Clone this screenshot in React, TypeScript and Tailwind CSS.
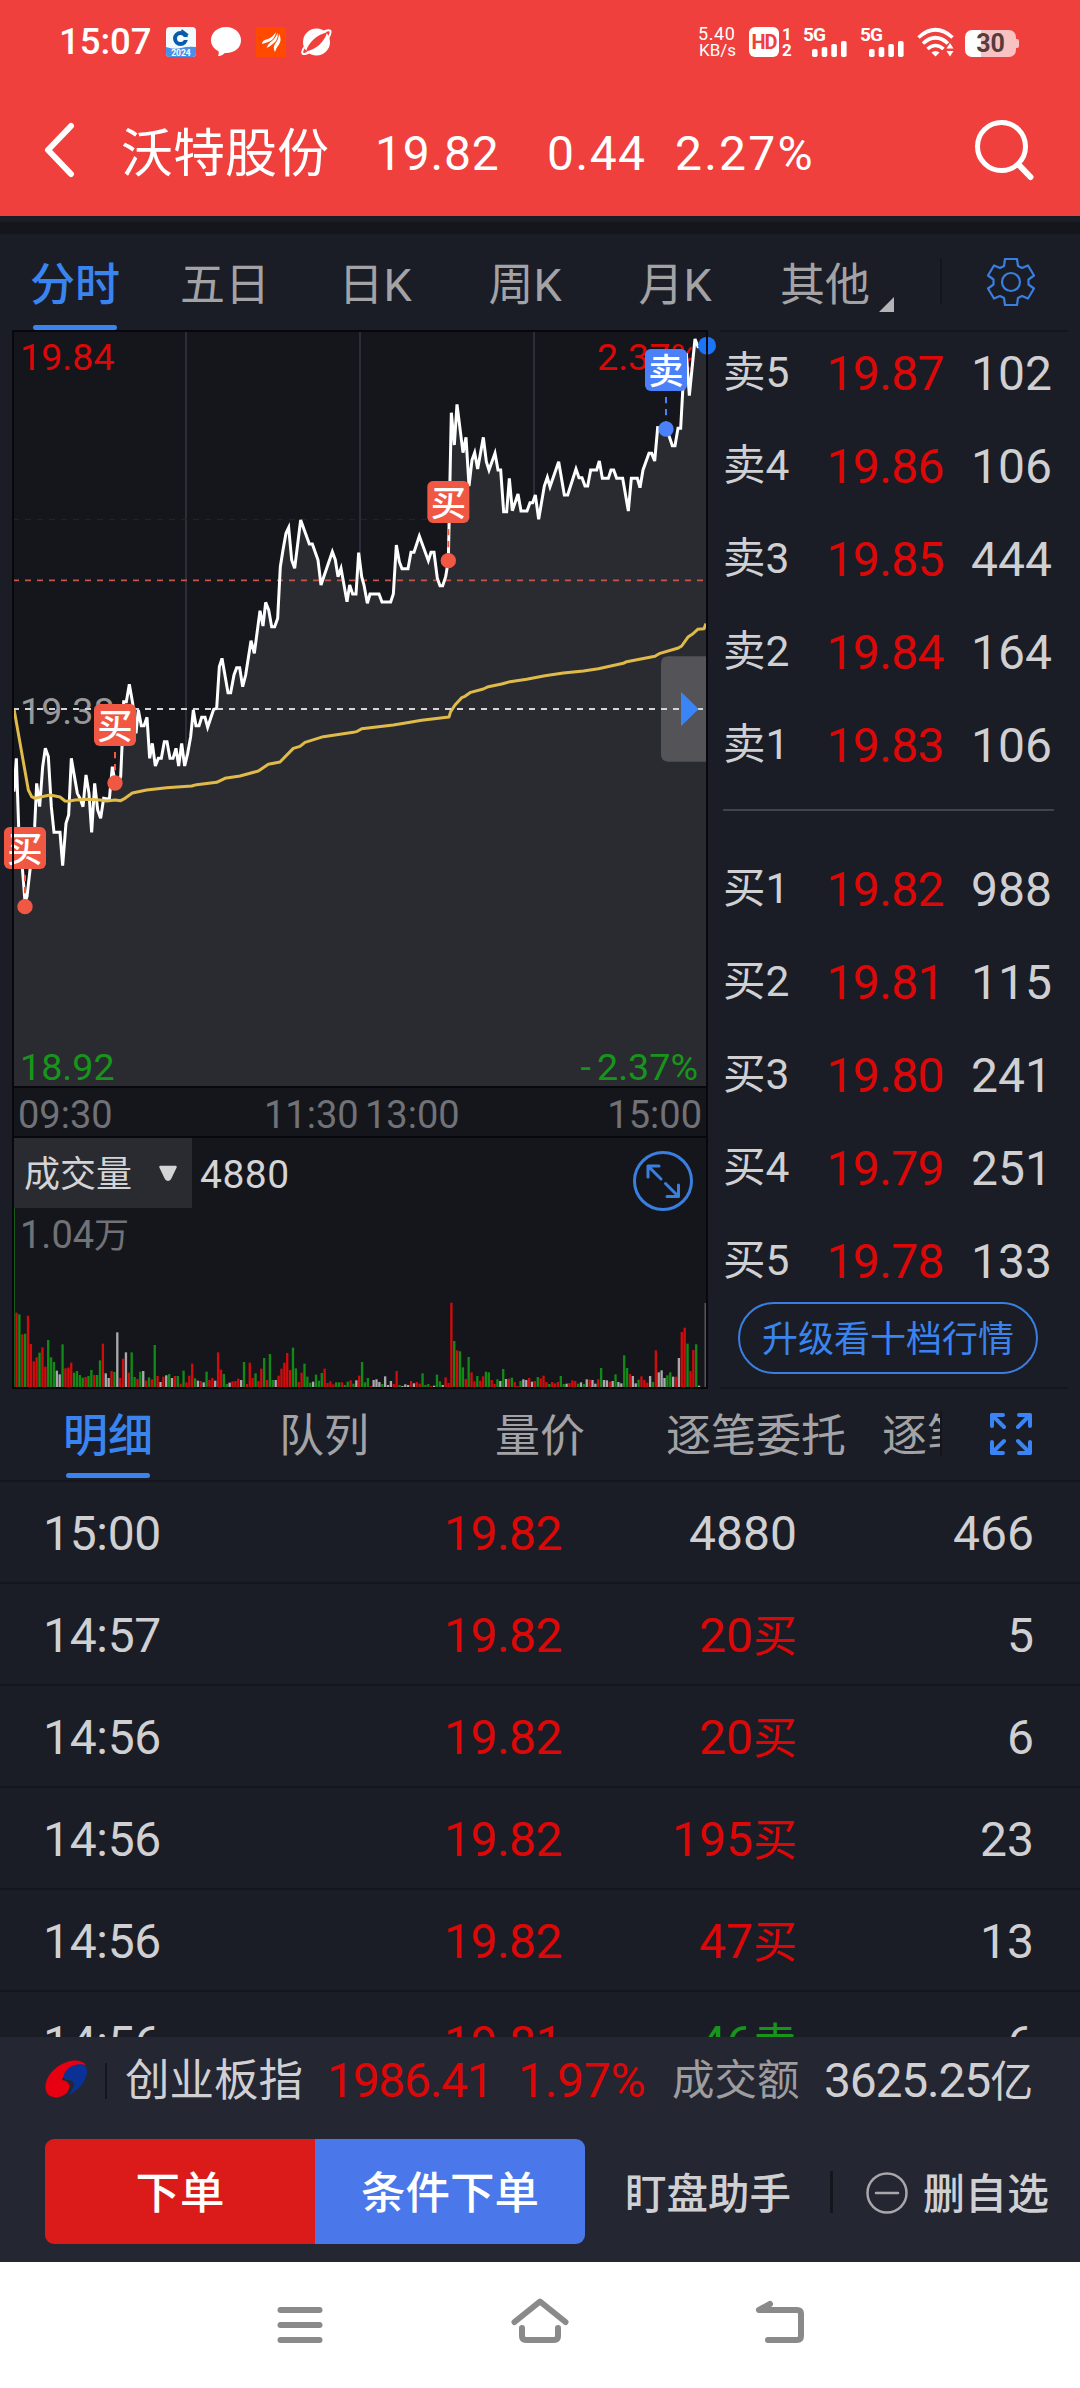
import React from "react";

// --- DATA ---

const periodTabs = ["分时", "五日", "日K", "周K", "月K", "其他"];
const detailTabs = ["明细", "队列", "量价", "逐笔委托", "逐笔成交"];

const asks = [
    { label: "卖5", price: "19.87", volume: "102" },
    { label: "卖4", price: "19.86", volume: "106" },
    { label: "卖3", price: "19.85", volume: "444" },
    { label: "卖2", price: "19.84", volume: "164" },
    { label: "卖1", price: "19.83", volume: "106" },
];

const bids = [
    { label: "买1", price: "19.82", volume: "988" },
    { label: "买2", price: "19.81", volume: "115" },
    { label: "买3", price: "19.80", volume: "241" },
    { label: "买4", price: "19.79", volume: "251" },
    { label: "买5", price: "19.78", volume: "133" },
];

const trades = [
    { time: "15:00", price: "19.82", volume: "4880", side: "", count: "466" },
    { time: "14:57", price: "19.82", volume: "20", side: "买", count: "5" },
    { time: "14:56", price: "19.82", volume: "20", side: "买", count: "6" },
    { time: "14:56", price: "19.82", volume: "195", side: "买", count: "23" },
    { time: "14:56", price: "19.82", volume: "47", side: "买", count: "13" },
    { time: "14:56", price: "19.81", volume: "46", side: "卖", count: "6" },
];

// Price per minute, chart units are a third of a pixel
const pricePoints =
    "42,1415 49,1315 56,1520 66,1630 75,1745 81,1730 90,1650 104,1520 110,1390 119,1460 128,1340 136,1285 145,1310 154,1460 162,1537 180,1537 188,1637 198,1510 206,1485 214,1315 232,1420 240,1435 249,1460 258,1365 267,1420 275,1537 284,1390 293,1470 302,1495 311,1435 328,1438 337,1340 345,1385 354,1390 362,1370 366,1280 371,1145 379,1145 388,1093 398,1150 408,1240 415,1170 424,1217 432,1217 441,1192 449,1315 457,1270 466,1338 475,1315 484,1315 493,1265 501,1265 510,1315 519,1315 528,1285 536,1338 545,1270 554,1338 563,1300 572,1250 580,1170 588,1217 597,1217 605,1192 615,1192 623,1222 632,1195 641,1168 650,1165 658,1040 666,1015 684,1118 692,1118 702,1065 710,1043 719,1043 728,1100 737,1065 753,962 763,1000 780,872 789,918 797,847 806,870 815,920 824,920 833,895 841,740 849,690 858,640 866,623 875,720 884,745 902,600 928,672 937,672 954,720 963,795 997,695 1006,720 1014,770 1023,745 1041,845 1049,795 1058,822 1068,822 1076,698 1085,770 1092,795 1102,850 1110,822 1137,822 1146,846 1172,846 1180,822 1189,675 1198,725 1206,746 1224,746 1233,697 1242,697 1258,648 1285,722 1293,697 1302,697 1312,775 1320,797 1328,797 1337,770 1345,722 1354,278 1363,375 1371,253 1389,398 1398,352 1407,498 1416,420 1424,398 1433,447 1450,352 1459,425 1467,450 1485,400 1494,450 1502,450 1511,575 1520,575 1528,475 1537,572 1554,522 1563,573 1581,573 1590,548 1598,548 1606,525 1616,598 1633,498 1642,472 1650,500 1676,425 1693,525 1703,525 1728,447 1737,473 1746,473 1755,498 1763,498 1772,450 1790,450 1798,423 1807,475 1825,475 1833,450 1841,450 1850,475 1868,475 1885,573 1894,475 1912,475 1920,503 1929,450 1947,400 1955,400 1964,423 1973,323 1997,325 2008,350 2017,377 2025,377 2034,325 2042,325 2050,180 2059,100 2068,227 2085,57 2094,80 2118,80";

const averagePoints =
    "42,1167 85,1410 95,1430 105,1435 125,1430 150,1425 180,1431 195,1443 205,1444 225,1440 260,1438 300,1440 320,1443 345,1440 362,1442 375,1435 397,1419 440,1410 500,1403 575,1398 590,1394 650,1387 675,1375 720,1368 775,1353 805,1333 840,1326 880,1285 900,1279 915,1267 970,1250 1060,1237 1072,1234 1085,1226 1180,1215 1230,1207 1265,1201 1347,1191 1352,1175 1365,1155 1385,1133 1395,1129 1412,1117 1450,1107 1465,1100 1505,1092 1530,1085 1580,1078 1635,1067 1690,1059 1750,1053 1795,1046 1870,1030 1880,1025 1965,1009 1980,1000 2035,984 2045,978 2065,950 2078,942 2093,928 2112,926 2118,911";

// One bar per minute: colour letter and the top of the bar, the base line is at 801
const volumeBars =
    "r578 g583 r643 g641 r587 r672 r724 r712 g698 r682 r740 g660 g712 g726 w752 w763 g673 r745 r743 r728 g758 g753 g765 g773 r771 g768 g750 r765 g765 g721 r671 w760 w774 r753 g756 w637 r774 r716 w697 r758 g697 g771 r777 g755 w753 r782 g772 r778 g675 r768 w786 r770 w766 g762 w774 r768 g768 r791 g752 r787 r767 r731 g775 w782 r783 w787 g755 r780 r774 w782 r697 r749 g762 g792 w788 r784 r783 r776 w780 g726 r792 r728 r774 g760 r783 r746 g714 r780 g702 g780 w780 r767 r746 r728 r699 r750 g683 g745 r786 r758 g731 g770 g788 w785 g764 g782 g759 r746 r789 r784 r793 g787 g787 r787 g795 g785 r781 g791 w781 r767 g726 g787 g774 r798 w780 w778 w786 g792 w769 w795 w783 r792 r753 g795 w798 w793 w795 r783 w790 r786 r791 g760 g795 g792 r798 w797 g764 g784 w795 r772 r789 r548 g663 r691 g694 g742 r777 g711 r757 r784 g768 r782 r769 g755 g757 r780 r792 g778 w783 g747 w777 r776 g773 r786 r798 g783 w778 w780 r774 w785 r783 g771 r775 r767 r786 g792 r786 r790 r786 g768 g792 w791 r789 r781 r783 g791 w787 g792 w778 r779 w780 w791 r778 g744 w780 w781 r785 w783 g763 w786 w790 g706 g744 r762 w768 w790 g779 r769 r780 r788 w768 g786 r691 w757 w751 w774 g766 g757 w770 r770 w714 r636 r623 g671 r753 r690 g673 w797";

const barColors: Record<string, string> = { r: "#d00c0c", g: "#128a16", w: "#a9a9ab" };

const markers = [
    { text: "买", x: 75, boxY: 1521, dotY: 1760, color: "#f05843" },
    { text: "买", x: 345, boxY: 1152, dotY: 1389, color: "#f05843" },
    { text: "买", x: 1345, boxY: 483, dotY: 722, color: "#f05843" },
    { text: "卖", x: 1998, boxY: 87, dotY: 327, color: "#4a80f8" },
];

// --- STATUS BAR ---

function Signal() {
    return (
        <div className="relative h-[30px] w-[44px]">
            <span className="absolute left-0 top-0 text-[19px] font-bold leading-[15px] tracking-[-1px]">5G</span>
            <svg className="absolute bottom-0 right-0" width="35" height="16" viewBox="0 0 35 16" fill="#fff">
                <rect x="0" y="8" width="5.6" height="8" rx="1.8" />
                <rect x="9.7" y="6" width="5.6" height="10" rx="1.8" />
                <rect x="19.3" y="3" width="5.6" height="13" rx="1.8" />
                <rect x="29" y="0" width="5.6" height="16" rx="1.8" />
            </svg>
        </div>
    );
}

function StatusBar() {
    return (
        <div className="flex h-[84px] items-center pl-[59px] pr-[61px] text-white">
            <span className="w-[107px] text-[36.500px] font-medium leading-none">15:07</span>
            <div className="flex items-center gap-[15px]">
                <svg width="30" height="30" viewBox="0 0 30 30">
                    <rect width="30" height="30" rx="4" fill="#f2fafe" />
                    <path d="M0 20 Q8 23 15 21 T30 20 V26 Q30 30 26 30 H4 Q0 30 0 26 Z" fill="#4a90e8" />
                    <circle cx="14.500" cy="11.500" r="5.500" fill="none" stroke="#0a5cab" strokeWidth="4" />
                    <path d="M16.500 10 H24 V13 H16.500 Z" fill="#f2fafe" />
                    <rect x="12.200" y="9.200" width="4.600" height="4.600" transform="rotate(45 14.500 11.500)" fill="#fff" />
                    <path d="M15.500 3 L22 8" stroke="#0a5cab" strokeWidth="1.8" />
                    <text x="15" y="28.5" fontSize="8.5" textAnchor="middle" fill="#fff" fontWeight="700">2024</text>
                </svg>
                <svg width="30" height="30" viewBox="0 0 30 30" fill="#fff">
                    <path d="M15 0 C23.500 0 30 5.500 30 13.300 C30 21 23.500 26 15 26 L13.800 26 C11.500 28.500 9 29 7 29 C7.800 27.500 8 26 7.500 24.300 C3 22 0 18.200 0 13.300 C0 5.500 6.500 0 15 0 Z" />
                </svg>
                <svg width="30" height="30" viewBox="0 0 30 30">
                    <rect width="30" height="30" rx="1" fill="#ff4a00" />
                    <path d="M6 17 Q6 13 12 12 Q17 10 20 5 Q19 12 13.500 14.500 Q10 15.500 6 17 Z" fill="#fff" />
                    <path d="M10.500 21 Q12.500 16 16 14 Q20 11 21.500 5.500 Q22.500 12 18.500 15.500 Q15 19 10.500 21 Z" fill="#fff" />
                    <path d="M19 25 Q16.500 20 19 17 Q23 12 23 6.500 Q26 13 23 17.500 Q20 21 19 25 Z" fill="#fff" />
                </svg>
                <svg width="31" height="30" viewBox="0 0 31 30">
                    <circle cx="15.500" cy="15" r="13.500" fill="#fff" />
                    <path d="M5 24.500 C7 16 16 7 26 5.500 C24 14 15 23 5 24.500 Z" fill="#ef403d" />
                    <path d="M3.500 20 C0.500 24 0.500 27 3 27 C5 27 8 25.500 10 24.500 M21 5.500 C24 4 27.500 2.500 29 3.500 C30 4.500 29 8 27.500 10.500" fill="none" stroke="#fff" strokeWidth="2" />
                </svg>
            </div>
            <div className="ml-auto flex items-center">
                <div className="flex w-[51px] flex-col items-start text-[18px] leading-[17px]">
                    <span className="tracking-[0.600px]">5.40</span>
                    <span className="pl-[1px] text-[17px]">KB/s</span>
                </div>
                <div className="flex h-[30px] w-[30px] items-center justify-center rounded-[6px] bg-white text-[20px] font-bold leading-none tracking-[-1px] text-[#ef403d]">
                    HD
                </div>
                <div className="ml-[3px] flex w-[21px] flex-col text-[17px] font-bold leading-[16px]">
                    <span>1</span>
                    <span>2</span>
                </div>
                <Signal />
                <div className="w-[13px]" />
                <Signal />
                <svg className="ml-[13px]" width="38" height="30" viewBox="0 0 38 30">
                    <g fill="none" stroke="#fff" strokeWidth="3.600">
                        <path d="M1.500 10.500 Q18.500 -5 35.500 10.500" />
                        <path d="M6 16.500 Q18.500 5 31 16.500" />
                        <path d="M10.500 22 Q18.500 15 26.500 22" />
                    </g>
                    <path d="M14.500 25.500 Q18.500 22.500 22.500 25.500 L18.500 29.500 Z" fill="#fff" />
                    <path d="M29.500 21.500 L33 16 L36.500 21.500 Z M29.500 24 L33 29.500 L36.500 24 Z" fill="#fff" />
                </svg>
                <div className="ml-[10px] mt-[2px] flex items-center">
                    <div className="flex h-[27px] w-[51px] items-center justify-center rounded-[7px] bg-linear-to-r from-white from-[31%] to-[#f9c2c2] to-[31%] text-[25px] font-bold leading-none text-[#543c3c]">
                        30
                    </div>
                    <div className="h-[9px] w-[3px] rounded-r-[2px] bg-[#f9c2c2]" />
                </div>
            </div>
        </div>
    );
}

function TitleBar() {
    return (
        <div className="flex h-[132px] items-center pl-[44px] pr-[45px] text-white">
            <svg className="-mt-[1px]" width="31" height="56" viewBox="0 0 31 56">
                <path d="M27 4 L4 28 L27 52" fill="none" stroke="#fff" strokeWidth="6" strokeLinecap="round" strokeLinejoin="round" />
            </svg>
            <h1 className="ml-[46px] mt-[9px] w-[254px] text-[52px] leading-none">沃特股份</h1>
            <div className="mt-[8px] flex text-[48px] leading-none">
                <span className="w-[172px] tracking-[0.800px]">19.82</span>
                <span className="w-[128px] tracking-[1.5px]">0.44</span>
                <span className="tracking-[2.200px]">2.27%</span>
            </div>
            <svg className="-mt-[1px] ml-auto" width="62" height="62" viewBox="0 0 62 62" fill="none" stroke="#fff" strokeLinecap="round">
                <circle cx="28.500" cy="27.500" r="24" strokeWidth="5" />
                <path d="M46 46 L57.500 58" strokeWidth="6" />
            </svg>
        </div>
    );
}

// --- TABS ---

function PeriodTabs() {
    return (
        <div className="flex h-[96px] text-[45px] leading-none text-[#a3a3a6]">
            <div className="flex w-[900px]">
                {periodTabs.map((tab, index) => (
                    <div key={tab} className="relative flex flex-1 items-center justify-center pt-[6px]">
                        <span className={index === 0 ? "font-medium text-[#3a84f0]" : ""}>{tab}</span>
                        {index === 0 && <div className="absolute bottom-0 h-[5px] w-[84px] rounded-sm bg-[#3a84f0]" />}
                        {tab === "其他" && (
                            <svg className="absolute bottom-[18px] right-[6px]" width="15" height="15" viewBox="0 0 15 15">
                                <path d="M15 0 V15 H0 Z" fill="#b4b4b6" />
                            </svg>
                        )}
                    </div>
                ))}
            </div>
            <div className="ml-[40px] mt-[24px] h-[46px] w-[2px] bg-[#15161b]" />
            <svg className="ml-[45px] mt-[24px]" width="48" height="48" viewBox="0 0 48 48" fill="none" stroke="#3a7fe0" strokeWidth="2.200" strokeLinejoin="round">
                <path d="M18 1 H30 L31 8 L35 10 L41 7.500 L47 17.500 L41.500 21.500 V26.500 L47 30.500 L41 40.500 L35 38 L31 40 L30 47 H18 L17 40 L13 38 L7 40.500 L1 30.500 L6.500 26.500 V21.500 L1 17.500 L7 7.500 L13 10 L17 8 Z" />
                <circle cx="24" cy="24" r="9" />
            </svg>
        </div>
    );
}

function DetailTabs() {
    return (
        <div className="flex h-[91px] text-[45px] leading-none text-[#a3a3a6]">
            <div className="flex w-[940px] overflow-hidden">
                {detailTabs.map((tab, index) => (
                    <div key={tab} className="relative flex w-[216px] shrink-0 items-center justify-center pt-[4px]">
                        <span className={index === 0 ? "font-medium text-[#3a84f0]" : ""}>{tab}</span>
                        {index === 0 && <div className="absolute bottom-[2px] h-[5px] w-[84px] rounded-sm bg-[#3a84f0]" />}
                    </div>
                ))}
            </div>
            <div className="mt-[22px] h-[45px] w-[2px] bg-[#15161b]" />
            <svg className="ml-[48px] mt-[24px]" width="42" height="42" viewBox="0 0 42 42" fill="none" stroke="#3a84f5" strokeWidth="4" strokeLinecap="round" strokeLinejoin="round">
                <path d="M13 2 H2 V13 M2 2 L14 14" />
                <path d="M29 2 H40 V13 M40 2 L28 14" />
                <path d="M13 40 H2 V29 M2 40 L14 28" />
                <path d="M29 40 H40 V29 M40 40 L28 28" />
            </svg>
        </div>
    );
}

// --- CHARTS ---

function PriceChart() {
    return (
        <svg className="block" width="720" height="758" viewBox="0 30 2160 2274">
            <rect x="36" y="30" width="2088" height="2274" fill="#15161b" />
            <path d="M558 36 V2298 M1080 36 V2298 M1602 36 V2298" stroke="#2c2d38" strokeWidth="6" />
            <path d="M39 598 H2118" stroke="#24262b" strokeWidth="3" strokeDasharray="18 18" />
            <text x="60" y="149" fontSize="113" fill="#dc0808">19.84</text>
            <text x="2094" y="149" fontSize="113" fill="#dc0808" textAnchor="end">2.37%</text>
            <polygon points={"42,2298 " + pricePoints + " 2118,2298"} fill="#2a2b30" />
            <text x="60" y="1213" fontSize="113" fill="#98989b">19.38</text>
            <text x="60" y="2279" fontSize="113" fill="#17951b">18.92</text>
            <text x="2094" y="2279" fontSize="113" fill="#17951b" textAnchor="end">
                <tspan letterSpacing="18">-</tspan>2.37%
            </text>
            <path d="M39 781 H2118" stroke="#c75546" strokeWidth="5" strokeDasharray="18 18" />
            <polyline points={pricePoints} fill="none" stroke="#fff" strokeWidth="9" strokeLinejoin="miter" />
            <polyline points={averagePoints} fill="none" stroke="#e0bb4a" strokeWidth="9" strokeLinejoin="round" />
            {/* Handle that folds the order book */}
            <path d="M2121 1009 H2005 Q1983 1009 1983 1031 V1303 Q1983 1325 2005 1325 H2121 Z" fill="#545358" />
            <path d="M39 1167 H2118" stroke="#d5d5d7" strokeWidth="6" strokeDasharray="18 18" />
            <path d="M2043 1115 L2096 1167 L2043 1219 Z" fill="#3a84f5" />
            {markers.map((marker) => (
                <g key={marker.x}>
                    <path d={`M${marker.x} ${marker.boxY + 144} V${marker.dotY}`} stroke={marker.color} strokeWidth="6" strokeDasharray="19 17" />
                    <circle cx={marker.x} cy={marker.dotY} r="23" fill={marker.color} />
                    <rect x={marker.x - 63} y={marker.boxY} width="126" height="126" rx="17" fill={marker.color} />
                    <text x={marker.x} y={marker.boxY + 104} fontSize="106" fontWeight="500" fill="#fff" textAnchor="middle">{marker.text}</text>
                </g>
            ))}
            <circle cx="2121" cy="77" r="27" fill="#1c74f8" />
            <rect x="39" y="33" width="2082" height="2268" fill="none" stroke="#07080c" strokeWidth="6" />
        </svg>
    );
}

function VolumeChart() {
    return (
        <div className="relative ml-[12px] h-[253px] w-[696px] border-2 border-[#07080c] bg-[#15161b]">
            <svg className="absolute left-0 top-0" width="692" height="249" viewBox="42 54 2076 747">
                <rect x="42" y="54" width="3" height="747" fill="#155c1c" />
                {volumeBars.split(" ").map((bar, index) => {
                    const top = Number(bar.slice(1));
                    return <rect key={index} x={46 + index * 8.64} y={top} width="7" height={801 - top} fill={barColors[bar[0]]} />;
                })}
                <rect x="2114" y="549" width="3" height="252" fill="#77777a" />
            </svg>
            <div className="relative flex h-[70px] items-center text-[#d4d4d6]">
                <div className="flex h-[70px] w-[178px] items-center bg-[#2a2b30] pl-[10px]">
                    <span className="mt-[3px] w-[134px] text-[36px] leading-none">成交量</span>
                    <svg width="20" height="17" viewBox="0 0 20 17">
                        <path d="M2.500 2 H17.500 L12 13.500 Q10 16 8 13.500 Z" fill="#d4d4d6" stroke="#d4d4d6" strokeWidth="2.500" strokeLinejoin="round" />
                    </svg>
                </div>
                <span className="ml-[8px] mt-[4px] text-[39px] leading-none tracking-[0.500px]">4880</span>
                <svg className="ml-auto mr-[13px] mt-[16px]" width="60" height="60" viewBox="0 0 60 60" fill="none" stroke="#3a7fe0" strokeWidth="3" strokeLinecap="round" strokeLinejoin="round">
                    <circle cx="30" cy="30" r="28.500" />
                    <path d="M26 15 H15 V26 M15 15 L28 28" />
                    <path d="M34 45.500 H45.500 V34 M45.500 45.500 L32.500 32.500" />
                </svg>
            </div>
            <div className="relative pl-[6px] pt-[8px] text-[38px] leading-none text-[#707277]">
                1.04<span className="text-[35px]">万</span>
            </div>
        </div>
    );
}

// --- ORDER BOOK ---

function BookRow({ label, price, volume }: { label: string; price: string; volume: string }) {
    return (
        <div className="flex h-[93px] items-center text-[48px] leading-none">
            <span className="w-[92px] whitespace-nowrap text-[42.500px] text-[#d0d0d2]">{label}</span>
            <span className="w-[129px] text-right tracking-[-0.600px] text-[#dc0808]">{price}</span>
            <span className="flex-1 text-right text-[#d0d0d2]">{volume}</span>
        </div>
    );
}

function OrderBook() {
    return (
        <div className="h-full w-[348px] border-y-2 border-[#15161b] pl-[3px] pr-[14px]">
            <div className="-mt-[5px] pr-[2px]">
                {asks.map((row) => (
                    <BookRow key={row.label} {...row} />
                ))}
            </div>
            <div className="mt-[17px] h-[2px] bg-[#41434b]" />
            <div className="mt-[32px] pr-[2px]">
                {bids.map((row) => (
                    <BookRow key={row.label} {...row} />
                ))}
            </div>
            <button className="ml-[15px] -mt-[6px] flex h-[72px] w-[300px] items-center justify-center rounded-full border-2 border-[#3a7fe0] pt-[4px] text-[36px] leading-none text-[#3a84f0]">
                升级看十档行情
            </button>
        </div>
    );
}

// --- TRADES ---

function TradeList() {
    return (
        <div className="h-[557px] overflow-hidden border-t-2 border-[#15161b]">
            {trades.map((trade, index) => (
                <div key={index} className="flex h-[102px] items-center border-b-2 border-[#15161b] pl-[43px] pr-[46px] pt-[4px] text-[48px] leading-none text-[#d0d0d2]">
                    <span className="w-[180px] tracking-[-0.300px]">{trade.time}</span>
                    <span className="w-[339px] text-right tracking-[-0.500px] text-[#dc0808]">{trade.price}</span>
                    {trade.side === "" && <span className="w-[235px] text-right">{trade.volume}</span>}
                    {trade.side !== "" && (
                        <span className={trade.side === "买" ? "w-[235px] text-right text-[#dc0808]" : "w-[235px] text-right text-[#17951b]"}>
                            {trade.volume}
                            <span className="text-[44px]">{trade.side}</span>
                        </span>
                    )}
                    <span className="flex-1 text-right">{trade.count}</span>
                </div>
            ))}
        </div>
    );
}

// --- FOOTER ---

function Footer() {
    return (
        <div className="h-[225px] bg-[#242632] text-[#d0d0d2]">
            <div className="flex h-[102px] items-center pl-[45px] pr-[45px] pb-[14px] text-[48px] leading-none">
                <svg className="-mt-[4px]" width="42" height="38" viewBox="0 0 42 38">
                    <path d="M41 5 C36 -2 22 -1 11 8 C2 15 -2 26 2 33 C6 40 19 38 23 31 C27 24 22 21 17 20 C19 11 31 3 41 5 Z" fill="#e60012" />
                    <path d="M41 6 C36 2 25 5 21 11 C18 15 18 19 22 20 C31 20 31 27 23 35 C34 31 42 20 42 11 Z" fill="#0a3296" />
                </svg>
                <div className="ml-[18px] h-[36px] w-[2px] bg-[#15161b]" />
                <span className="ml-[18px] mt-[1px] w-[202px] whitespace-nowrap text-[44.500px]">创业板指</span>
                <span className="w-[191px] tracking-[-1.300px] text-[#dc0808]">1986.41</span>
                <span className="w-[154px] tracking-[-0.300px] text-[#dc0808]">1.97%</span>
                <span className="w-[152px] text-[42.500px] text-[#9d9da0]">成交额</span>
                <span className="whitespace-nowrap tracking-[-1.200px]">
                    3625.25<span className="text-[43px]">亿</span>
                </span>
            </div>
            <div className="flex h-[105px] items-center pl-[45px]">
                <button className="h-full w-[270px] rounded-l-[9px] bg-[#db1a1a] pt-[6px] text-[44.500px] font-medium leading-none text-white">下单</button>
                <button className="h-full w-[270px] rounded-r-[9px] bg-[#4a77ea] pt-[6px] text-[44.500px] font-medium leading-none text-white">条件下单</button>
                <span className="ml-[40px] mt-[6px] text-[41.500px] font-medium leading-none">盯盘助手</span>
                <div className="ml-[39px] h-[42px] w-[3px] bg-[#15161b]" />
                <svg className="ml-[33px] mt-[3px]" width="42" height="42" viewBox="0 0 42 42" fill="none" stroke="#a8a8ab" strokeWidth="2.500" strokeLinecap="round">
                    <circle cx="21" cy="21" r="19.500" />
                    <path d="M10 21 H32" />
                </svg>
                <span className="ml-[15px] mt-[6px] text-[42px] font-medium leading-none">删自选</span>
            </div>
        </div>
    );
}

function SystemNav() {
    return (
        <div className="flex h-[126px] justify-center gap-[180px] bg-white pt-[33px]">
            <svg width="60" height="60" viewBox="0 0 60 60" fill="none" stroke="#8a8a8a" strokeWidth="6" strokeLinecap="round">
                <path d="M10.500 15 H49.500 M10.500 30 H49.500 M10.500 45 H49.500" />
            </svg>
            <svg width="60" height="60" viewBox="0 0 60 60" fill="none" stroke="#8a8a8a" strokeWidth="6" strokeLinecap="round" strokeLinejoin="round">
                <path d="M4.500 27 L30 6.500 L55.500 27" />
                <path d="M12 33 V41 Q12 45 16 45 H44 Q48 45 48 41 V33" />
            </svg>
            <svg width="60" height="60" viewBox="0 0 60 60" fill="none" stroke="#8a8a8a" strokeWidth="6" strokeLinecap="round" strokeLinejoin="round">
                <path d="M20 9 L9 15 H47 Q51 15 51 19 V41 Q51 45 47 45 H18" />
            </svg>
        </div>
    );
}

export default function App() {
    return (
        <div className="flex h-[2388px] w-[1080px] flex-col overflow-hidden bg-[#1a1d26] font-[Roboto,'Noto_Sans_CJK_SC',sans-serif]">
            <header className="h-[216px] bg-[#ef403d]">
                <StatusBar />
                <TitleBar />
            </header>
            <div className="mt-[6px] h-[12px] bg-[#15161b]" />
            <PeriodTabs />

            <div className="flex h-[1059px]">
                <div className="w-[720px]">
                    <PriceChart />
                    <div className="ml-[12px] flex h-[48px] w-[696px] items-center border-x-2 border-[#07080c] bg-[#15161b] pl-[4px] pr-[4px] pt-[6px] text-[38px] leading-none text-[#707277]">
                        <span className="w-[246px]">09:30</span>
                        <span className="w-[101px]">11:30</span>
                        <span>13:00</span>
                        <span className="ml-auto">15:00</span>
                    </div>
                    <VolumeChart />
                </div>
                <OrderBook />
            </div>

            <DetailTabs />
            <TradeList />
            <Footer />
            <SystemNav />
        </div>
    );
}
